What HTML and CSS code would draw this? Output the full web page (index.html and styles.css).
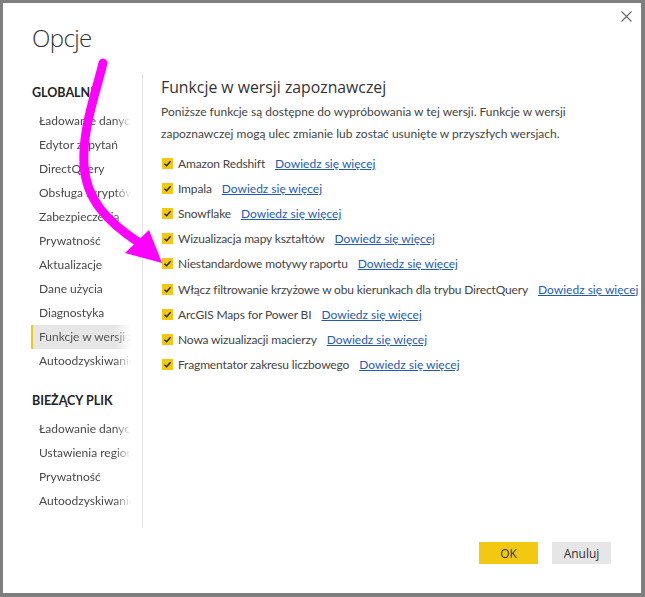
FILE: index.html
```html
<!DOCTYPE html>
<html lang="pl">
<head>
<meta charset="utf-8">
<title>Opcje</title>
<link rel="stylesheet" href="styles.css">
</head>
<body>
<div class="frame">
  <div class="dialog">
    <button class="close" aria-label="Zamknij">
      <svg width="11" height="11" viewBox="0 0 11 11"><path d="M0.5 0.5 L10.5 10.5 M10.5 0.5 L0.5 10.5" stroke="#6b6b6b" stroke-width="1.2" fill="none"/></svg>
    </button>
    <h1 class="title">Opcje</h1>
    <div class="body">
      <nav class="nav">
        <div class="nav-head">GLOBALNE</div>
        <ul class="nav-list">
          <li>Ładowanie danych</li>
          <li>Edytor zapytań</li>
          <li>DirectQuery</li>
          <li>Obsługa skryptów języka R</li>
          <li>Zabezpieczenia</li>
          <li>Prywatność</li>
          <li>Aktualizacje</li>
          <li>Dane użycia</li>
          <li>Diagnostyka</li>
          <li class="active">Funkcje w wersji zapoznawczej</li>
          <li>Autoodzyskiwanie</li>
        </ul>
        <div class="nav-head second">BIEŻĄCY PLIK</div>
        <ul class="nav-list">
          <li>Ładowanie danych</li>
          <li>Ustawienia regionalne</li>
          <li>Prywatność</li>
          <li>Autoodzyskiwanie</li>
        </ul>
      </nav>
      <main class="content">
        <h2 class="heading">Funkcje w wersji zapoznawczej</h2>
        <p class="desc">Poniższe funkcje są dostępne do wypróbowania w tej wersji. Funkcje w wersji zapoznawczej mogą ulec zmianie lub zostać usunięte w przyszłych wersjach.</p>
        <ul class="features">
          <li><span class="check"></span><span class="label">Amazon Redshift</span><a class="more" href="#">Dowiedz się więcej</a></li>
          <li><span class="check"></span><span class="label">Impala</span><a class="more" href="#">Dowiedz się więcej</a></li>
          <li><span class="check"></span><span class="label">Snowflake</span><a class="more" href="#">Dowiedz się więcej</a></li>
          <li><span class="check"></span><span class="label">Wizualizacja mapy kształtów</span><a class="more" href="#">Dowiedz się więcej</a></li>
          <li><span class="check"></span><span class="label">Niestandardowe motywy raportu</span><a class="more" href="#">Dowiedz się więcej</a></li>
          <li><span class="check"></span><span class="label">Włącz filtrowanie krzyżowe w obu kierunkach dla trybu DirectQuery</span><a class="more" href="#">Dowiedz się więcej</a></li>
          <li><span class="check"></span><span class="label">ArcGIS Maps for Power BI</span><a class="more" href="#">Dowiedz się więcej</a></li>
          <li><span class="check"></span><span class="label">Nowa wizualizacji macierzy</span><a class="more" href="#">Dowiedz się więcej</a></li>
          <li><span class="check"></span><span class="label">Fragmentator zakresu liczbowego</span><a class="more" href="#">Dowiedz się więcej</a></li>
        </ul>
      </main>
    </div>
    <div class="buttons">
      <button class="btn primary">OK</button>
      <button class="btn">Anuluj</button>
    </div>
    <svg class="arrow" width="640" height="300" viewBox="0 0 640 300">
      <path d="M103 63 C 95 96, 82 130, 84 165 C 86 200, 108 222, 138 242" stroke="#ff00ff" stroke-width="9" fill="none" stroke-linecap="round"/>
      <polygon points="149,230 125,253 162,263" fill="#ff00ff"/>
    </svg>
  </div>
</div>
</body>
</html>
```
FILE: styles.css
```css
* { box-sizing: border-box; }
html, body { margin: 0; padding: 0; }
body {
  background: #7f7f7f;
  width: 645px;
  height: 597px;
  overflow: hidden;
  font-family: "Lato", "Open Sans", sans-serif;
}
.frame {
  padding: 3px 4px 4px 3px;
}
.dialog {
  position: relative;
  background: #fff;
  height: 590px;
  display: flex;
  flex-direction: column;
}
.close {
  position: absolute;
  top: 8px;
  right: 9px;
  border: 0;
  background: none;
  padding: 0;
  width: 11px;
  height: 11px;
}
.close svg { display: block; }
.title {
  margin: 20px 0 0 29px;
  font-family: "Open Sans", sans-serif;
  font-size: 24px;
  letter-spacing: -0.6px;
  line-height: 30px;
  font-weight: 300;
  color: #333;
}
.body {
  display: flex;
  margin-top: 20px;
  height: 455px;
}
.nav {
  flex: none;
  width: 112px;
  margin-left: 28px;
  border-right: 1px solid #e1e1e1;
  padding-top: 11px;
}
.nav-head {
  font-size: 12.5px;
  font-weight: 700;
  color: #252525;
  line-height: 18px;
  padding-left: 1px;
  margin-bottom: 7px;
}
.nav-head.second { margin-top: 19px; margin-bottom: 7px; }
.nav-list {
  list-style: none;
  margin: 0;
  padding: 0;
  width: 100px;
}
.nav-list li {
  height: 24px;
  line-height: 24px;
  font-size: 12px;
  color: #484848;
  padding-left: 8px;
  white-space: nowrap;
  overflow: hidden;
  -webkit-mask-image: linear-gradient(to right, #000 84px, transparent 100px);
  mask-image: linear-gradient(to right, #000 84px, transparent 100px);
}
.nav-list li.active {
  background: #e6e6e6;
  box-shadow: inset 2px 0 0 #f2c811;
  color: #555;
}
.content {
  flex: 1;
  padding-left: 18px;
  min-width: 0;
}
.heading {
  margin: 2px 0 0;
  font-family: "Open Sans", sans-serif;
  font-size: 15.8px;
  line-height: 24px;
  font-weight: 400;
  color: #333;
}
.desc {
  margin: 2px 0 0;
  width: 470px;
  font-size: 12px;
  line-height: 22px;
  color: #444;
}
.features {
  list-style: none;
  margin: 6px 0 0;
  padding: 0;
}
.features li {
  display: flex;
  align-items: center;
  height: 25.1px;
  white-space: nowrap;
  font-size: 12px;
}
.check {
  width: 11px;
  height: 11px;
  margin-left: 1px;
  margin-right: 5px;
  background: #f2c811 url("data:image/svg+xml;utf8,<svg xmlns='http://www.w3.org/2000/svg' width='11' height='11' viewBox='0 0 11 11'><path d='M2.5 5.8 L4.6 7.8 L8.6 3.2' stroke='%23222' stroke-width='1.4' fill='none'/></svg>") no-repeat center;
  flex: none;
}
.label {
  color: #444;
  letter-spacing: -0.15px;
  margin-right: 10px;
}
.more {
  color: #1e5bb8;
  text-decoration: underline;
}
.buttons {
  display: flex;
  justify-content: flex-end;
  gap: 14px;
  padding-right: 30px;
  margin-top: 14px;
}
.btn {
  width: 59px;
  height: 22px;
  border: 0;
  background: #e6e6e6;
  font-family: "Open Sans", sans-serif;
  font-size: 12px;
  color: #333;
  padding: 0;
}
.btn.primary { background: #f2c811; }
.arrow {
  position: absolute;
  left: -3px;
  top: -3px;
  pointer-events: none;
}
```
